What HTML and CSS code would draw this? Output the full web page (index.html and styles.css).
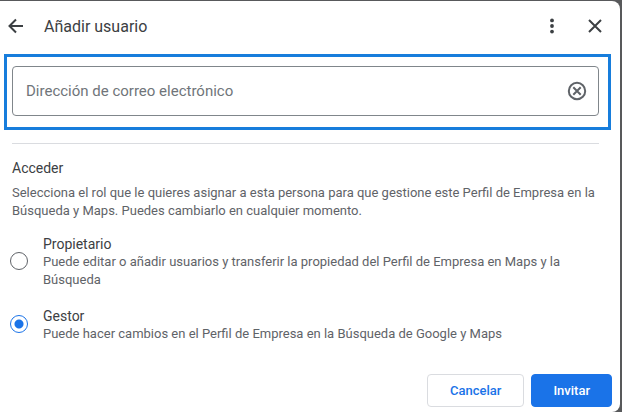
FILE: index.html
```html
<!DOCTYPE html>
<html lang="es">
<head>
    <meta charset="UTF-8">
    <meta name="viewport" content="width=device-width, initial-scale=1.0">
    <title>Añadir usuario</title>
    <link rel="stylesheet" href="styles.css">
</head>
<body>
    <form class="dialog">
        <header class="dialog-header">
            <button type="button" class="icon-btn" aria-label="Atrás">
                <svg width="16" height="16" viewBox="0 0 16 16"><path d="M15 8H2M8 1.5L1.5 8L8 14.5"/></svg>
            </button>
            <h1 class="title">Añadir usuario</h1>
            <button type="button" class="icon-btn" aria-label="Más opciones">
                <svg class="dots" width="16" height="16" viewBox="0 0 16 16"><circle cx="8" cy="2.4" r="1.9"/><circle cx="8" cy="8" r="1.9"/><circle cx="8" cy="13.6" r="1.9"/></svg>
            </button>
            <button type="button" class="icon-btn close" aria-label="Cerrar">
                <svg width="16" height="16" viewBox="0 0 16 16"><path d="M2 2L14 14M14 2L2 14"/></svg>
            </button>
        </header>

        <div class="highlight">
            <div class="field">
                <input type="email" class="email" placeholder="Dirección de correo electrónico" aria-label="Dirección de correo electrónico">
                <button type="button" class="icon-btn clear" aria-label="Borrar">
                    <svg width="20" height="20" viewBox="0 0 20 20"><circle cx="10" cy="10" r="8.2"/><path d="M6.3 6.3L13.7 13.7M13.7 6.3L6.3 13.7"/></svg>
                </button>
            </div>
        </div>

        <section class="access">
            <h2 class="subtitle">Acceder</h2>
            <p class="text">Selecciona el rol que le quieres asignar a esta persona para que gestione este Perfil de Empresa en la Búsqueda y Maps. Puedes cambiarlo en cualquier momento.</p>
            <label class="role">
                <input type="radio" name="role" value="owner">
                <span class="role-info">
                    <span class="subtitle">Propietario</span>
                    <span class="text">Puede editar o añadir usuarios y transferir la propiedad del Perfil de Empresa en Maps y la Búsqueda</span>
                </span>
            </label>
            <label class="role">
                <input type="radio" name="role" value="manager" checked>
                <span class="role-info">
                    <span class="subtitle">Gestor</span>
                    <span class="text">Puede hacer cambios en el Perfil de Empresa en la Búsqueda de Google y Maps</span>
                </span>
            </label>
        </section>

        <footer class="actions">
            <button type="button" class="btn">Cancelar</button>
            <button type="submit" class="btn btn-primary">Invitar</button>
        </footer>
    </form>
</body>
</html>
```
FILE: styles.css
```css
* {
    box-sizing: border-box;
}

body {
    margin: 0;
    padding: 1px 2px 0 0;
    background: #58595b;
    font-family: Roboto, sans-serif;
    color: #3c4043;
}

.dialog {
    background: #fff;
    border-radius: 0 8px 8px 0;
    padding: 5px 8px 5px 4px;
}

.dialog-header {
    display: flex;
    align-items: center;
    height: 40px;
    padding-right: 5px;
}

.title {
    flex: 1;
    margin: 0 0 0 16px;
    font-size: 16px;
    font-weight: 400;
}

.icon-btn {
    display: flex;
    padding: 4px;
    border: none;
    background: none;
    cursor: pointer;
}

.icon-btn svg {
    fill: none;
    stroke: #3c4043;
    stroke-width: 2;
}

.icon-btn .dots {
    fill: #3c4043;
    stroke: none;
}

.close {
    margin-left: 19px;
}

.highlight {
    margin: 8px 1px 0 0;
    padding: 9px 9px 11px 5px;
    border: 3px solid #177ddc;
}

.field {
    display: flex;
    align-items: center;
    height: 50px;
    padding: 0 7px 0 13px;
    border: 1px solid #80868b;
    border-radius: 4px;
}

.email {
    flex: 1;
    min-width: 0;
    padding: 0;
    border: none;
    outline: none;
    font: 15px Roboto, sans-serif;
    color: #3c4043;
}

.email::placeholder {
    color: #70757a;
    opacity: 1;
}

.clear svg {
    stroke: #5f6368;
}

.access {
    margin: 13px 13px 0 8px;
    padding-top: 15px;
    border-top: 1px solid #dadce0;
}

.subtitle {
    display: block;
    margin: 0;
    font-size: 14px;
    font-weight: 400;
    line-height: 18px;
}

.text {
    display: block;
    margin: 0;
    font-size: 13px;
    line-height: 18px;
    color: #5f6368;
}

h2.subtitle {
    margin-bottom: 7px;
}

.role {
    display: flex;
    align-items: center;
    gap: 15px;
    margin-top: 15px;
}

.role + .role {
    margin-top: 18px;
}

.role input {
    appearance: none;
    flex: none;
    width: 18px;
    height: 18px;
    margin: 0 0 2px -2px;
    border: 1px solid #5f6368;
    border-radius: 50%;
}

.role input:checked {
    border-color: #1a73e8;
    background: radial-gradient(circle, #1a73e8 4px, transparent 5px);
}

.actions {
    display: flex;
    justify-content: flex-end;
    gap: 7px;
    margin-top: 31px;
}

.btn {
    height: 33px;
    padding: 0 22px;
    border: 1px solid #dadce0;
    border-radius: 4px;
    background: #fff;
    color: #1a73e8;
    font: 500 13px Roboto, sans-serif;
    cursor: pointer;
}

.btn-primary {
    padding: 0 21px;
    border-color: #1a73e8;
    background: #1a73e8;
    color: #fff;
}
```
